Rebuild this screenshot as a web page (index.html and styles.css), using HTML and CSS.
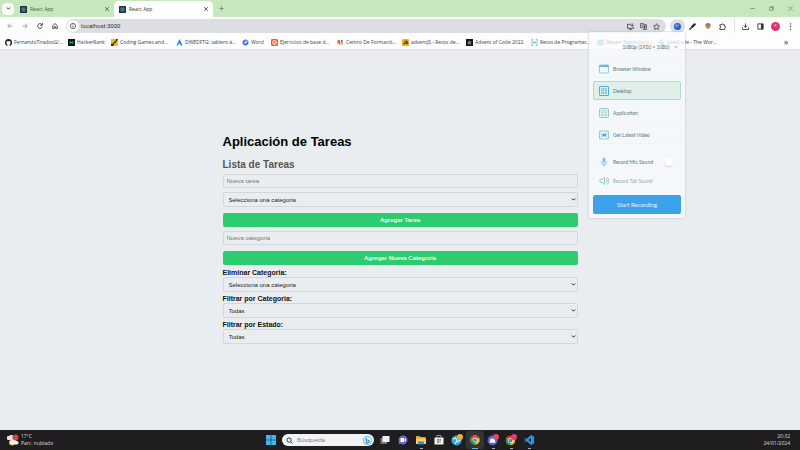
FILE: index.html
```html
<!DOCTYPE html>
<html lang="es">
<head>
<meta charset="utf-8">
<title>React App</title>
<link rel="stylesheet" href="styles.css">
</head>
<body>
<svg class="defs" aria-hidden="true">
  <symbol id="react" viewBox="0 0 16 16"><rect width="16" height="16" rx="2" fill="#24292f"/><g fill="none" stroke="#4f9db5" stroke-width="1"><ellipse cx="8" cy="8" rx="6" ry="2.4"/><ellipse cx="8" cy="8" rx="6" ry="2.4" transform="rotate(60 8 8)"/><ellipse cx="8" cy="8" rx="6" ry="2.4" transform="rotate(120 8 8)"/></g><circle cx="8" cy="8" r="1.2" fill="#4f9db5"/></symbol>
  <symbol id="close" viewBox="0 0 16 16"><path d="M3 3l10 10M13 3L3 13" fill="none" stroke="currentColor" stroke-width="2"/></symbol>
  <symbol id="chevron" viewBox="0 0 16 16"><path d="M3 5l5 5 5-5" fill="none" stroke="currentColor" stroke-width="3"/></symbol>
  <symbol id="chrome" viewBox="0 0 20 20"><circle cx="10" cy="10" r="9.5" fill="#fbc116"/><path d="M10 10L1.8 5.2A9.5 9.5 0 0 1 18.2 5.3z" fill="#e33b2e"/><path d="M1.8 5.2A9.5 9.5 0 0 0 9.5 19.5L13 12l-6-1z" fill="#229a4b"/><path d="M3 4h15.5v2H10z" fill="#e33b2e"/><circle cx="10" cy="10" r="4.8" fill="#fff"/><circle cx="10" cy="10" r="3.7" fill="#3b82e8"/></symbol>
</svg>

<header class="browser">
  <div class="tabstrip">
    <button class="tab-search" aria-label="Buscar pestañas"><svg class="i5"><use href="#chevron"/></svg></button>
    <div class="tab"><svg class="i7"><use href="#react"/></svg><span>React App</span><button aria-label="Cerrar"><svg class="i6"><use href="#close"/></svg></button></div>
    <div class="tab active"><svg class="i7"><use href="#react"/></svg><span>React App</span><button aria-label="Cerrar"><svg class="i6"><use href="#close"/></svg></button></div>
    <button class="new-tab" aria-label="Nueva pestaña"><svg class="i5" viewBox="0 0 16 16"><path d="M8 1v14M1 8h14" stroke="currentColor" stroke-width="2.4"/></svg></button>
    <div class="window-buttons">
      <button aria-label="Minimizar"><svg class="i5" viewBox="0 0 16 16"><path d="M1 8h14" stroke="currentColor" stroke-width="2"/></svg></button>
      <button aria-label="Restaurar"><svg class="i5" viewBox="0 0 16 16"><path d="M5 4V1h10v10h-3M1 5h10v10H1z" fill="none" stroke="currentColor" stroke-width="2"/></svg></button>
      <button aria-label="Cerrar"><svg class="i5" viewBox="0 0 16 16"><path d="M1 1l14 14M15 1L1 15" stroke="currentColor" stroke-width="2"/></svg></button>
    </div>
  </div>

  <div class="toolbar">
    <div class="nav">
      <button class="dim" aria-label="Atrás"><svg class="i6" viewBox="0 0 16 16"><path d="M15 8H2M8 2L2 8l6 6" fill="none" stroke="currentColor" stroke-width="2"/></svg></button>
      <button class="dim" aria-label="Adelante"><svg class="i6" viewBox="0 0 16 16"><path d="M1 8h13M8 2l6 6-6 6" fill="none" stroke="currentColor" stroke-width="2"/></svg></button>
      <button aria-label="Recargar"><svg class="i6" viewBox="0 0 16 16"><path d="M14 10A6.3 6.3 0 1 1 12.5 3.5L14 5M14.5 0v6h-6" fill="none" stroke="currentColor" stroke-width="2.2"/></svg></button>
      <button aria-label="Inicio"><svg class="i6" viewBox="0 0 16 16"><path d="M2 7l6-5.500 6 5.500v8h-4V10H6v5H2z" fill="none" stroke="currentColor" stroke-width="2.200"/></svg></button>
    </div>
    <div class="omnibox">
      <span class="site-info"><svg class="i6" viewBox="0 0 16 16"><circle cx="8" cy="8" r="7" fill="none" stroke="currentColor" stroke-width="1.800"/><path d="M8 7v5M8 4v2" stroke="currentColor" stroke-width="2"/></svg></span>
      <input aria-label="Dirección" value="localhost:3000">
      <svg class="i7" viewBox="0 0 16 16"><path d="M9 3H1v9h14V9M5 15h6M12 1v6M9 5l3 3 3-3" fill="none" stroke="currentColor" stroke-width="1.800"/></svg>
      <svg class="i7" viewBox="0 0 16 16"><path d="M1 1h7l3 10H1zM8 4h7v11H8l3-4" fill="none" stroke="currentColor" stroke-width="1.500"/><path d="M7 5a2 2 0 1 0 0 2H5M9 7h5M12 6c0 3-1 5-3 6M10 8l3 4" fill="none" stroke="currentColor" stroke-width="1.200"/></svg>
      <svg class="i7" viewBox="0 0 16 16"><path d="M8 1.500l2 4.500 5 .5-3.700 3.300L12.300 15 8 12.300 3.700 15l1-5.200L1 6.500 6 6z" fill="none" stroke="currentColor" stroke-width="1.600"/></svg>
    </div>
    <div class="extensions">
      <button class="current" aria-label="Grabador"><svg class="i7" viewBox="0 0 16 16"><circle cx="8" cy="8" r="8" fill="#1d62d1"/><circle cx="6" cy="6" r="4" fill="#4a9af2"/><circle cx="10" cy="5" r="2" fill="#e26083"/></svg></button>
      <button aria-label="Selector de color"><svg class="i7" viewBox="0 0 16 16"><path d="M2 14L9 7" stroke="#3f5a8c" stroke-width="4" stroke-linecap="round"/><path d="M8 8l5-5" stroke="#1c2230" stroke-width="5" stroke-linecap="round"/></svg></button>
      <button aria-label="Extensión"><svg class="i6" viewBox="0 0 16 16"><circle cx="8" cy="8" r="7" fill="#dba27e"/><path d="M1 7a7 7 0 0 1 14 0z" fill="#bd6a4a"/><path d="M3 9h4M9 9h4M5 13h6" stroke="#666644" stroke-width="1.500"/></svg></button>
      <button aria-label="Extensiones"><svg class="i7" viewBox="0 0 16 16"><path d="M2 4h4a2 2 0 0 1 4 0h3v4a2 2 0 0 1 0 4v3H2v-4a2 2 0 0 0 0-4z" fill="none" stroke="currentColor" stroke-width="2"/></svg></button>
    </div>
    <div class="actions">
      <button aria-label="Descargas"><svg class="i7" viewBox="0 0 16 16"><path d="M8 1v9M4 6l4 4 4-4M1 10v5h14v-5" fill="none" stroke="currentColor" stroke-width="2"/></svg></button>
      <button aria-label="Panel lateral"><svg class="i7" viewBox="0 0 16 16"><path d="M2 2h12v12H2z" fill="none" stroke="currentColor" stroke-width="2"/><path d="M9 2h5v12H9z" fill="currentColor"/></svg></button>
      <button class="avatar" aria-label="Perfil">F</button>
      <button aria-label="Menú"><svg class="i7" viewBox="0 0 16 16"><g fill="currentColor"><circle cx="8" cy="2" r="1.700"/><circle cx="8" cy="8" r="1.700"/><circle cx="8" cy="14" r="1.700"/></g></svg></button>
    </div>
  </div>

  <nav class="bookmarks">
    <a href="#"><svg class="i7" viewBox="0 0 16 16"><circle cx="8" cy="8" r="8" fill="#1d2126"/><path d="M5.500 16v-3.500C2.500 11 3 8 4 6.500V4l2.500 1h3L12 4v2.500c1 1.500 1.500 4.500-1.500 6V16z" fill="#fff"/></svg>FernandoTiradosG/...</a>
    <a href="#"><svg class="i7" viewBox="0 0 16 16"><rect width="16" height="16" fill="#0c1612"/><path d="M5 5v6M11 5v6M5 8h6" stroke="#39c266" stroke-width="2"/></svg>HackerRank</a>
    <a href="#"><svg class="i7" viewBox="0 0 16 16"><rect width="16" height="16" fill="#f2bb13"/><path d="M0 16V11l5-1 2-4 3-1 2-5h4L11 8l-4 3-2 5z" fill="#2b2a22"/></svg>Coding Games and...</a>
    <a href="#"><svg class="i7" viewBox="0 0 16 16"><path d="M8 0l7 15h-4L8 9l-4 6H1z" fill="#287be0"/><path d="M8 8l3 4H5z" fill="#8ab9f4"/></svg>DWEDFTG: tablero á...</a>
    <a href="#"><svg class="i7" viewBox="0 0 16 16"><path d="M8 3l4.500 2.500v5L8 13l-4.500-2.500v-5z" fill="none" stroke="#3568d4" stroke-width="4"/><path d="M8 3l4.500 2.500v2" fill="none" stroke="#6cb9ef" stroke-width="3"/></svg>Word</a>
    <a href="#"><svg class="i7" viewBox="0 0 16 16"><rect width="16" height="16" rx="3" fill="#ec6425"/><path d="M5 4h4a2 2 0 0 1 2 3h1v3a2 2 0 0 1-2 2H6a2 2 0 0 1-2-2V5z" fill="none" stroke="#fff" stroke-width="2"/><path d="M6 9h4" stroke="#fff" stroke-width="1.500"/></svg>Ejercicios de base d...</a>
    <a href="#"><svg class="i7" viewBox="0 0 16 16"><path d="M1 3l4-1 2 3v8H5V8H3v4H1z" fill="#df4c3b"/><path d="M8 6c4-2 6 0 6 7h-2c0-4-1-5-2-4v4H8z" fill="#d88764"/><circle cx="11" cy="4" r="2" fill="#474c7c"/></svg>Centro De Formació...</a>
    <a href="#"><svg class="i7" viewBox="0 0 16 16"><rect width="16" height="16" rx="2" fill="#f0b51b"/><path d="M7 4v7H4V9M13 5H9v3h4v3H9" fill="none" stroke="#3f3213" stroke-width="2"/></svg>adventJS - Retos de...</a>
    <a href="#"><svg class="i7" viewBox="0 0 16 16"><rect width="16" height="16" fill="#111713"/><path d="M8 2l1.500 4L14 6l-3.500 3 1.500 5-4-3-4 3 1.500-5L2 6h4.500z" fill="#83907b"/></svg>Advent of Code 2022</a>
    <a href="#"><svg class="i7" viewBox="0 0 16 16"><path d="M5 1H2v5L0 8l2 2v5h3M11 1h3v5l2 2-2 2v5h-3M5 5v6M11 5v6M5 8h6" fill="none" stroke="#43bfd0" stroke-width="1.800"/></svg>Retos de Programac...</a>
    <a href="#"><svg class="i7" viewBox="0 0 16 16"><path d="M1 3h14M1 8h14M1 13h14" stroke="#3f8fb2" stroke-width="3"/></svg>Maven Repository:...</a>
    <a href="#"><svg class="i7" viewBox="0 0 16 16"><path d="M11 1L3 8l6 6 4-3M7 9h8" fill="none" stroke="#33363a" stroke-width="2"/></svg>LeetCode - The Wor...</a>
    <button aria-label="Más marcadores">»</button>
  </nav>

  <aside class="recorder" aria-label="Grabador de pantalla">
    <div class="resolution">1080p (1920 × 1080)<svg class="i4"><use href="#chevron"/></svg></div>
    <div class="sources">
      <button><svg class="i10" viewBox="0 0 20 20"><rect x="1" y="2" width="18" height="16" rx="1" fill="none" stroke="currentColor" stroke-width="1.500"/><path d="M1 2h18v4H1z" fill="#5bb4e3"/><path d="M4 4h1M7 4h1M10 4h1" stroke="#fff" stroke-width="1.500"/></svg>Browser Window</button>
      <button class="selected"><svg class="i10" viewBox="0 0 20 20"><rect x="1" y="1" width="18" height="18" rx="1" fill="none" stroke="#52aed0" stroke-width="2"/><path d="M5 5h4v4H5zM12 5h3v4h-3zM5 12h4v3H5zM12 12h3v3h-3z" fill="none" stroke="#5fb6cf" stroke-width="1.500"/></svg>Desktop</button>
      <button><svg class="i10" viewBox="0 0 20 20"><rect x="1" y="1" width="18" height="18" rx="2" fill="none" stroke="currentColor" stroke-width="1.500"/><path d="M4 4h5v5H4zM12 4h4v5h-4zM4 12h5v4H4zM12 12h4v4h-4z" fill="none" stroke="#8fcac5" stroke-width="1.300"/></svg>Application</button>
      <button><svg class="i10" viewBox="0 0 20 20"><rect x="1" y="2" width="18" height="16" rx="1" fill="none" stroke="currentColor" stroke-width="1.500"/><path d="M4 2v16M16 2v16" stroke="#87c9d6" stroke-width="1.500" stroke-dasharray="2 1"/><path d="M7 6l7 4-7 4z" fill="#329fd0"/><path d="M13 6v8" stroke="#329fd0" stroke-width="1.500"/></svg>Get Latest Video</button>
    </div>
    <div class="sounds">
      <label><svg class="i10" viewBox="0 0 20 20"><rect x="7" y="1" width="6" height="11" rx="3" fill="#7cc7e1"/><path d="M4 9c0 8 12 8 12 0M10 15v4" fill="none" stroke="#5bb9ca" stroke-width="1.500"/></svg><span>Record Mic Sound</span><input type="checkbox"></label>
      <label class="off"><svg class="i10" viewBox="0 0 20 20"><path d="M2 7h4l5-4v14l-5-4H2zM14 6c3 2 3 6 0 8M16 3c5 4 5 10 0 14" fill="none" stroke="#83b9b9" stroke-width="1.500"/></svg><span>Record Tab Sound</span></label>
    </div>
    <button class="start">Start Recording</button>
  </aside>
</header>

<main class="page">
  <form class="tasks">
    <h1>Aplicación de Tareas</h1>
    <h2>Lista de Tareas</h2>
    <input class="field" type="text" placeholder="Nueva tarea" aria-label="Nueva tarea">
    <div class="pick gap-top"><select class="field" aria-label="Categoria de la tarea"><option>Selecciona una categoria</option></select><svg class="i5"><use href="#chevron"/></svg></div>
    <button class="add" type="button">Agregar Tarea</button>
    <input class="field" type="text" placeholder="Nueva categoria" aria-label="Nueva categoria">
    <button class="add" type="button">Agregar Nueva Categoría</button>
    <label for="del">Eliminar Categoria:</label>
    <div class="pick"><select class="field" id="del"><option>Selecciona una categoria</option></select><svg class="i5"><use href="#chevron"/></svg></div>
    <label for="cat">Filtrar por Categoria:</label>
    <div class="pick"><select class="field" id="cat"><option>Todas</option></select><svg class="i5"><use href="#chevron"/></svg></div>
    <label for="state">Filtrar por Estado:</label>
    <div class="pick"><select class="field" id="state"><option>Todas</option></select><svg class="i5"><use href="#chevron"/></svg></div>
  </form>
</main>

<footer class="taskbar">
  <div class="weather">
    <svg class="i12" viewBox="0 0 24 24"><circle cx="10" cy="17" r="6" fill="#f3a83b"/><path d="M2 12a4 4 0 0 1 2-8 6 6 0 0 1 10 2v6z" fill="#d6e6f6"/><path d="M9 21a4 4 0 0 1 1-8 5 5 0 0 1 9 1 3.500 3.500 0 0 1 1 7z" fill="#eef4fa"/><circle cx="17" cy="7" r="6" fill="#d8433b"/></svg>
    <div>17°C<br><span>Parc. nublado</span></div>
  </div>
  <div class="apps">
    <button aria-label="Inicio"><svg class="i10" viewBox="0 0 20 20"><path d="M0 0h9.500v9.500H0zM10.500 0H20v9.500h-9.500zM0 10.500h9.500V20H0zM10.500 10.500H20V20h-9.500z" fill="#43b6ef"/></svg></button>
    <div class="search">
      <svg class="i7" viewBox="0 0 16 16"><circle cx="7" cy="7" r="5" fill="none" stroke="#25272b" stroke-width="2"/><path d="M11 11l4 4" stroke="#25272b" stroke-width="2"/></svg>
      <input type="text" placeholder="Búsqueda" aria-label="Búsqueda">
      <svg class="i9" viewBox="0 0 20 20"><circle cx="10" cy="10" r="9" fill="#e7f6ff" stroke="#2a9bd8" stroke-width="1.500"/><path d="M7 4v10l3 2 4-3c0-3-3-4-5-4" fill="none" stroke="#1679c5" stroke-width="2.400"/></svg>
    </div>
    <button aria-label="Vista de tareas"><svg class="i10" viewBox="0 0 20 20"><path d="M1 6h13v12H1z" fill="#77777a"/><path d="M5 2h14v12H5z" fill="#eee"/></svg></button>
    <button aria-label="Chat"><svg class="i10" viewBox="0 0 20 20"><path d="M10 1a9 9 0 1 1-5 16.500L1 19l1-5A9 9 0 0 1 10 1z" fill="#6d70cf"/><rect x="5" y="6" width="7" height="8" rx="1" fill="#fff"/><path d="M13 9l3-2v6l-3-2z" fill="#fff"/></svg></button>
    <button class="open" aria-label="Explorador"><svg class="i10" viewBox="0 0 20 20"><path d="M0 2h7l2 2h10v14H0z" fill="#e9a520"/><path d="M0 7h20v11H0z" fill="#ffd159"/><path d="M4 13h12v6H4z" fill="#2f8fd8"/></svg></button>
    <button aria-label="Tienda"><svg class="i10" viewBox="0 0 20 20"><path d="M6 5V1h8v4" fill="none" stroke="#45abe2" stroke-width="2"/><path d="M1 5h18v14H1z" fill="#eff4f7"/><path d="M6 8h3.500v3.500H6z" fill="#ea5737"/><path d="M10.500 8H14v3.500h-3.500z" fill="#69ac36"/><path d="M6 12.500h3.500V16H6z" fill="#2b91d5"/><path d="M10.500 12.500H14V16h-3.500z" fill="#efb223"/></svg></button>
    <button aria-label="Globo"><svg class="i12" viewBox="0 0 24 24"><circle cx="11" cy="13" r="10" fill="#3aa3d8"/><path d="M3 10l6-2 3 5-4 7M12 16l7-4" fill="none" stroke="#d6f2f2" stroke-width="2.500"/><circle cx="18" cy="6" r="6" fill="#efb12d"/></svg></button>
    <button class="open current" aria-label="Chrome"><svg class="i10"><use href="#chrome"/></svg></button>
    <button class="open" aria-label="Discord"><svg class="i12" viewBox="0 0 24 24"><circle cx="11" cy="13" r="10" fill="#5360d5"/><path d="M5 17l2-8h8l2 8-4 1-1-1h-2l-1 1z" fill="#fff"/><circle cx="18" cy="6" r="6" fill="#e14b59"/></svg></button>
    <button class="open" aria-label="Chrome, perfil"><svg class="i12" viewBox="0 0 24 24"><use href="#chrome" x="1" y="3" width="20" height="20"/><circle cx="18" cy="6" r="6" fill="#e6396e"/></svg></button>
    <button class="open" aria-label="Visual Studio Code"><svg class="i10" viewBox="0 0 20 20"><path d="M14 0l6 3v14l-6 3-9-8-3 2-2-1 4-3-4-3 2-1 3 2zM14 6l-5 4 5 4z" fill="#2497df" fill-rule="evenodd"/></svg></button>
  </div>
  <div class="clock">20:32<br>24/01/2024</div>
</footer>
</body>
</html>
```
FILE: styles.css
```css
* { box-sizing: border-box; }

body {
  margin: 0;
  min-height: 100vh;
  display: flex;
  flex-direction: column;
  font: 5px/8px "Open Sans", "Noto Sans", sans-serif;
  color: #3c4043;
  background: #e9edf0;
}

button, input, select { font: inherit; color: inherit; margin: 0; }
button { padding: 0; border: 0; background: none; display: flex; align-items: center; justify-content: center; }
svg { display: block; flex: none; }
a { color: inherit; text-decoration: none; }

.defs { position: absolute; width: 0; height: 0; }
.i4 { width: 4px; height: 4px; }
.i5 { width: 5px; height: 5px; }
.i6 { width: 6px; height: 6px; }
.i7 { width: 7px; height: 7px; }
.i9 { width: 9px; height: 9px; }
.i10 { width: 10px; height: 10px; }
.i12 { width: 12px; height: 12px; }

/* Browser frame */
.browser { position: relative; background: #fdfdfe; border-bottom: 1px solid #dde1e5; }

.tabstrip { display: flex; align-items: center; height: 17px; padding-left: 2px; background: #c7e7be; color: #465b44; }
.tab-search { width: 12px; height: 12px; margin-right: 1px; border-radius: 4px; background: #f7fbf5; color: #222; }
.tab { display: flex; align-items: center; gap: 3px; width: 99px; height: 16px; padding: 0 4px 0 5px; align-self: flex-end; border-radius: 5px 5px 0 0; }
.tab span { flex: 1; }
.tab.active { background: #fdfdfe; color: #33373a; }
.new-tab { width: 16px; color: #4e8f50; }
.window-buttons { display: flex; margin-left: auto; color: #61775e; }
.window-buttons button { width: 19px; }

.toolbar { display: flex; align-items: center; height: 18px; color: #303236; }
.nav { display: flex; padding-left: 2px; }
.nav button { width: 15px; height: 14px; }
.nav .dim { color: #85898d; }
.omnibox { flex: 1; display: flex; align-items: center; gap: 6px; height: 14px; margin-left: 4px; padding: 0 6px 0 1px; border-radius: 7px; background: #dddee1; }
.site-info { display: flex; align-items: center; justify-content: center; width: 12px; height: 12px; margin-right: -4px; border-radius: 50%; background: #fafafa; }
.omnibox input { flex: 1; min-width: 0; padding: 0; border: 0; outline: 0; background: none; font: 6px/8px Roboto, "Open Sans", sans-serif; }
.extensions { display: flex; margin: 0 3px 0 4px; border-right: 1px solid #d8e8d5; padding-right: 4px; }
.extensions button { width: 15px; height: 14px; }
.extensions .current { border-radius: 50%; background: #dcdde0; }
.actions { display: flex; align-items: center; padding-right: 2px; }
.actions button { width: 15px; height: 14px; }
.actions .avatar { width: 9px; height: 9px; margin: 0 3px; border-radius: 50%; background: #e23370; color: #fff; font-size: 4px; }

.bookmarks {
  display: grid;
  grid-template-columns: 63px 43px 65px 66px 29px 66px 65px 64px 65px 66px 61px 1fr 16px;
  align-items: center;
  height: 14px;
  padding: 0 6px 0 5px;
}
.bookmarks a { display: flex; align-items: center; gap: 2px; white-space: nowrap; }
.bookmarks button { font-size: 9px; }

.recorder {
  position: absolute;
  top: 32px;
  right: 115px;
  width: 96px;
  padding: 11px 4px 4px;
  background: rgba(249, 251, 252, .76);
  box-shadow: 0 0 2px #b5babd;
  color: #667075;
  font: 5px/8px Lato, "Open Sans", sans-serif;
}
.resolution { display: flex; align-items: center; justify-content: center; gap: 4px; padding-left: 26px; color: #5f6569; white-space: nowrap; }
.sources { display: grid; gap: 3px; margin-top: 8px; }
.sources button { justify-content: flex-start; gap: 4px; height: 19px; padding: 0 5px; border: 1px solid #f0f4f6; border-radius: 2px; background: #f4f8fa; }
.sources svg { color: #7eb7c6; }
.sources .selected { border-color: #b6d8cb; background: #def0e8; }
.sounds { display: grid; margin: 8px 0 5px; background: #f4f8fa; }
.sounds label { display: flex; align-items: center; gap: 4px; height: 19px; padding: 0 6px; white-space: nowrap; }
.sounds span { flex: 1; }
.sounds .off { color: #a0a9ad; }
.sounds input { appearance: none; width: 8px; height: 8px; margin: 0 2px; border-radius: 50%; background: #fff; box-shadow: 0 1px 1px #cdd4d8; }
.start { width: 100%; height: 19px; border-radius: 2px; background: #3da2ea; color: #e4f3fd; font-size: 6px; }

/* Task app */
.page { flex: 1; display: flex; align-items: center; justify-content: center; padding: 8px 8px 10px; }
.tasks { width: 100%; max-width: 355px; font: 6px/8px "Liberation Sans", Arial, sans-serif; color: #222; }
h1 { margin: 0; font-size: 13px; line-height: 16px; color: #000; }
h2 { margin: 9px 0 3px; font-size: 10px; line-height: 12px; color: #555; }
.field { display: block; width: 100%; height: 14px; padding: 0 3px; border: 1px solid #d3d7da; border-radius: 2px; background: #e9edf0; outline: 0; }
.field::placeholder { color: #777; opacity: 1; }
.pick { position: relative; }
.pick select { appearance: none; height: 15px; padding-left: 5px; }
.pick svg { position: absolute; right: 2px; top: 5px; color: #111; pointer-events: none; }
.gap-top { margin-top: 4px; }
.add { width: 100%; height: 14px; margin: 6px 0 4px; border-radius: 2px; background: #2ecc71; color: #e8fbef; font-weight: bold; }
.tasks label { display: block; margin-top: 3px; font-size: 7px; line-height: 8px; font-weight: bold; color: #111; }

/* Taskbar */
.taskbar { display: grid; grid-template-columns: 1fr auto 1fr; align-items: center; height: 20px; background: #1f1d20; color: #dedede; line-height: 7px; }
.weather { display: flex; align-items: center; gap: 2px; padding-left: 7px; }
.apps { display: flex; align-items: center; }
.apps button { position: relative; width: 18px; height: 18px; border-radius: 2px; }
.apps .current { background: #333336; }
.apps .open::after { content: ""; position: absolute; bottom: 0; width: 3px; height: 1px; background: #a8a8a8; }
.apps .current::after { width: 6px; background: #5bbcec; }
.search { display: flex; align-items: center; gap: 4px; width: 92px; height: 12px; margin: 0 2px; padding: 0 2px 0 4px; border-radius: 6px; background: #f2f3f5; font-size: 6px; color: #333; }
.search input { flex: 1; min-width: 0; padding: 0; border: 0; outline: 0; background: none; }
.search input::placeholder { color: #75787c; opacity: 1; }
.clock { padding-right: 10px; text-align: right; }
```
